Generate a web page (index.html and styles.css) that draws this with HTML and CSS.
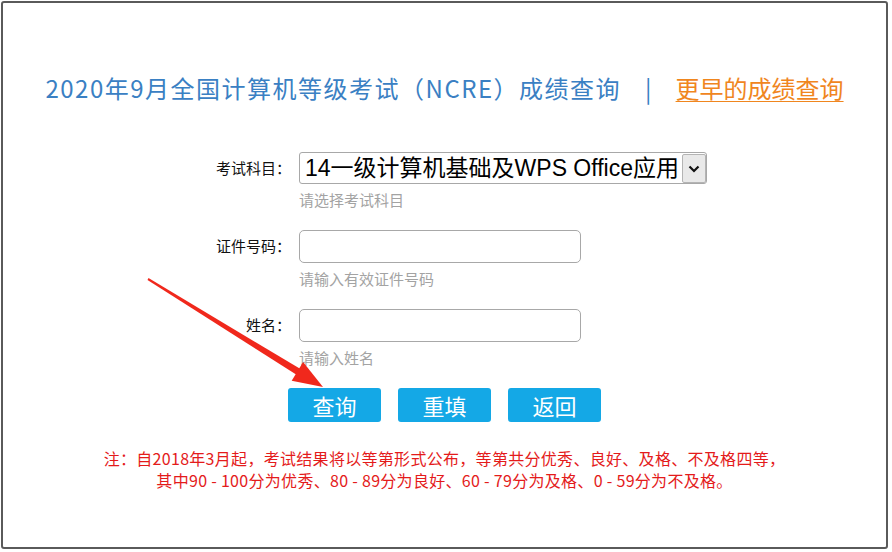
FILE: index.html
```html
<!DOCTYPE html>
<html lang="zh-CN">
<head>
    <meta charset="UTF-8">
    <meta name="viewport" content="width=device-width, initial-scale=1.0">
    <title>NCRE成绩查询</title>
    <link rel="stylesheet" href="styles.css">
</head>
<body>
    <div class="frame">
        <h1 class="title">
            <span class="title-main">2020年9月全国计算机等级考试（NCRE）成绩查询</span>
            <span class="title-sep">|</span>
            <a class="title-link" href="#">更早的成绩查询</a>
        </h1>

        <form class="query-form" onsubmit="return false;">
            <label class="form-label" for="km">考试科目：</label>
            <div class="form-field">
                <div class="select-wrap">
                    <select id="km" class="form-select">
                        <option>14一级计算机基础及WPS Office应用</option>
                    </select>
                    <span class="select-arrow">
                        <svg width="12" height="8" viewBox="0 0 12 8"><path d="M1.5 1.5 L6 6 L10.5 1.5" fill="none" stroke="#111" stroke-width="2.2"/></svg>
                    </span>
                </div>
                <div class="form-hint">请选择考试科目</div>
            </div>

            <label class="form-label" for="zjhm">证件号码：</label>
            <div class="form-field">
                <input type="text" id="zjhm" class="form-input">
                <div class="form-hint">请输入有效证件号码</div>
            </div>

            <label class="form-label" for="xm">姓名：</label>
            <div class="form-field">
                <input type="text" id="xm" class="form-input">
                <div class="form-hint">请输入姓名</div>
            </div>
        </form>

        <div class="buttons">
            <button class="btn">查询</button>
            <button class="btn">重填</button>
            <button class="btn">返回</button>
        </div>

        <p class="note">
            注：自2018年3月起，考试结果将以等第形式公布，等第共分优秀、良好、及格、不及格四等，<br>
            其中90 - 100分为优秀、80 - 89分为良好、60 - 79分为及格、0 - 59分为不及格。
        </p>
    </div>

    <!-- 红色箭头标注 -->
    <svg class="pointer" width="892" height="552" viewBox="0 0 892 552">
        <polygon points="148.5,278.1 147.5,279.9 296.5,374.8 300.1,368.8" fill="#f0281c"/>
        <polygon points="323,387 291.7,380.7 303.1,361.9" fill="#f0281c"/>
    </svg>
</body>
</html>
```

FILE: styles.css
```css
body {
    margin: 0;
    background-color: #fff;
    font-family: "Microsoft YaHei", "Noto Sans CJK SC", sans-serif;
}

.frame {
    box-sizing: border-box;
    width: 887px;
    height: 548px;
    margin: 1px;
    border: 2px solid #5a5a5a;
    border-radius: 3px;
    background-color: #fff;
}

.title {
    margin: 70px 0 0;
    display: flex;
    justify-content: center;
    align-items: center;
    font-size: 24px;
    line-height: 30px;
    font-weight: normal;
    color: #3a80c3;
}

.title-main {
    letter-spacing: 1.5px;
}

.title-sep {
    margin: 0 24px 0 24px;
}

.title-link {
    color: #f0861e;
    text-decoration: underline;
    text-underline-offset: 3px;
    text-decoration-thickness: 1px;
}

.query-form {
    margin-top: 49px;
    display: grid;
    grid-template-columns: 288px auto;
    column-gap: 8px;
    row-gap: 19px;
}

.form-label {
    text-align: right;
    font-size: 15px;
    line-height: 32px;
    color: #111;
}

.form-field {
    display: flex;
    flex-direction: column;
    align-items: flex-start;
}

.select-wrap {
    position: relative;
}

.form-select {
    -webkit-appearance: none;
    appearance: none;
    box-sizing: border-box;
    width: 408px;
    height: 32px;
    padding: 0 24px 0 5px;
    border: 1px solid #a8a8a8;
    border-radius: 3px;
    background-color: #fff;
    color: #000;
    font-family: "Liberation Sans", "Noto Sans CJK SC", sans-serif;
    font-size: 23px;
}

.select-arrow {
    position: absolute;
    top: 2px;
    right: 1px;
    width: 22px;
    height: 27px;
    display: flex;
    justify-content: center;
    align-items: center;
    background-color: #e9e9e9;
    border: 1px solid #b4b4b4;
    border-radius: 2px;
    pointer-events: none;
}

.form-input {
    box-sizing: border-box;
    width: 282px;
    height: 33px;
    padding: 0 6px;
    border: 1px solid #a8a8a8;
    border-radius: 5px;
    background-color: #fff;
    font-size: 15px;
}

.form-hint {
    margin-top: 5px;
    font-size: 15px;
    line-height: 22px;
    color: #a3a3a3;
}

.buttons {
    margin-top: 19px;
    display: flex;
    justify-content: center;
    gap: 17px;
}

.btn {
    width: 93px;
    height: 34px;
    padding: 0;
    border: none;
    border-radius: 3px;
    background-color: #14a8e6;
    color: #fff;
    font-family: "Microsoft YaHei", "Noto Sans CJK SC", sans-serif;
    font-size: 22px;
    cursor: pointer;
}

.note {
    margin: 25px 0 0;
    text-align: center;
    font-size: 16px;
    line-height: 22px;
    letter-spacing: 0.3px;
    color: #e41b1b;
}

.pointer {
    position: absolute;
    top: 0;
    left: 0;
    pointer-events: none;
}
```
